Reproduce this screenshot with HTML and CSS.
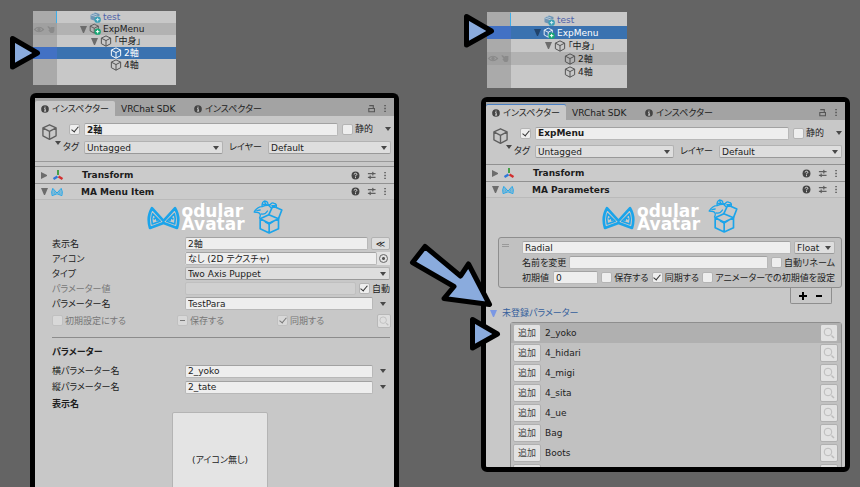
FILE: index.html
```html
<!DOCTYPE html>
<html lang="ja">
<head>
  <meta charset="UTF-8">
  <meta name="viewport" content="width=device-width, initial-scale=1.0">
  <title>MA Menu Item / MA Parameters</title>
  <link rel="stylesheet" href="styles.css">
</head>
<body>
  <svg class="symbols" aria-hidden="true">
    <symbol id="cube" viewBox="0 0 16 16">
      <path d="M8 1.2 14.2 4.2V11.6L8 14.9 1.8 11.6V4.2ZM1.8 4.2 8 7.4 14.2 4.2M8 7.4V14.9" fill="none" stroke="currentColor" stroke-width="1.3" stroke-linejoin="round"/>
    </symbol>
    <symbol id="prefab" viewBox="0 0 16 16">
      <use href="#cube" width="14" height="15"/>
      <circle cx="11.5" cy="11.5" r="4.3" fill="#17a673"/>
      <path d="M11.5 9.2v4.6M9.2 11.5h4.6" stroke="#fff" stroke-width="1.3"/>
    </symbol>
    <symbol id="model" viewBox="0 0 16 16">
      <path d="M2 5 8 2 14 4V7L8 6.5V13L2 11Z" fill="#6f95b4"/>
      <path d="M2 5 8 7M5 3.5 11 5.5" stroke="#c8d8e4" fill="none"/>
      <circle cx="11.5" cy="11.5" r="4.3" fill="#3b9fb5"/>
      <path d="M11.5 9.2v4.6M9.2 11.5h4.6" stroke="#d5eef2" stroke-width="1.3"/>
    </symbol>
    <symbol id="eye" viewBox="0 0 12 10">
      <path d="M1 5Q6 0 11 5Q6 10 1 5Z" fill="none" stroke="currentColor" stroke-width="1.2"/>
      <circle cx="6" cy="5" r="1.9" fill="currentColor"/>
    </symbol>
    <symbol id="hand" viewBox="0 0 12 12">
      <path d="M1 2 3 1.5 5.5 4V2.5H10.5V8L9 10.5H5.5L2.5 7 4 6Z" fill="currentColor"/>
    </symbol>
    <symbol id="info" viewBox="0 0 10 10">
      <circle cx="5" cy="5" r="4.8" fill="#444"/>
      <path d="M5 2v1.4M4 4.5H5.2V7.5M3.8 7.6h2.6" stroke="#ddd" stroke-width="1.2" fill="none"/>
    </symbol>
    <symbol id="help" viewBox="0 0 10 10">
      <circle cx="5" cy="5" r="4.4" fill="#444"/>
      <path d="M3.5 3.9Q3.6 2.5 5 2.5T6.5 3.8Q6.4 4.7 5 5.2V6M5 6.8V8" stroke="#ddd" stroke-width="1.1" fill="none"/>
    </symbol>
    <symbol id="preset" viewBox="0 0 10 10">
      <path d="M1 3H6M6.5 1V5M6.5 3H9.5M1 7H3.5M3.5 5V9M4 7H9.5" stroke="#444" stroke-width="1.1" fill="none"/>
    </symbol>
    <symbol id="dots" viewBox="0 0 4 10">
      <path d="M1.3 1h1.5v1.5H1.3ZM1.3 4.2h1.5v1.5H1.3ZM1.3 7.5h1.5V9H1.3Z" fill="#4a4a4a"/>
    </symbol>
    <symbol id="lock" viewBox="0 0 10 10">
      <path d="M2 5H8.3V8.7H2ZM2.5 1.8H7V5" fill="none" stroke="#555" stroke-width="1.2"/>
    </symbol>
    <symbol id="axes" viewBox="0 0 12 12">
      <path d="M6 1V6" stroke="#45a048" stroke-width="2"/>
      <path d="M5.5 7.5 1.5 10" stroke="#2f78d8" stroke-width="2.4"/>
      <path d="M6.5 7.5 10.5 10" stroke="#d22f2f" stroke-width="2.4"/>
    </symbol>
    <symbol id="ears" viewBox="0 0 100 70">
      <path d="M15 5Q-1 32 9 65L50 50 91 65Q101 32 85 5L50 44Z" fill="none" stroke="#1ba4ea" stroke-width="8" stroke-linejoin="round"/>
      <path d="M17 22Q12 38 16 53L40 45ZM83 22Q88 38 84 53L60 45ZM20 39 27 33 31 44M80 39 73 33 69 44" fill="none" stroke="#1ba4ea" stroke-width="5" stroke-linejoin="round"/>
    </symbol>
    <symbol id="catbox" viewBox="0 0 87 102">
      <g fill="none" stroke="#1ba4ea" stroke-width="5" stroke-linejoin="round" stroke-linecap="round">
        <path d="M20 56 47 70 75 56V86L47 99 20 86ZM20 56 46 44 75 56M47 70V98"/>
        <path d="M46 44 58 18 85 30 75 56M47 72 58 65M47 72 36 66"/>
        <path d="M2 36Q12 20 26 20 24 7 33 3 44 4 43 13L50 15Q54 6 62 10 71 12 68 22M2 36 15 38Q24 42 18 54M26 20Q36 15 45 16L54 25M33 4 37 14M24 42Q34 45 42 33" stroke-width="4"/>
        <path d="M28 13H40M55 17H66M10 32 20 30" stroke-width="4"/>
      </g>
    </symbol>
    <symbol id="search" viewBox="0 0 14 14">
      <circle cx="6" cy="6" r="3.8" fill="none" stroke="#bdbdbd" stroke-width="1"/>
      <path d="M9.5 9.5 12 12" stroke="#bdbdbd" stroke-width="1.5"/>
    </symbol>
    <symbol id="pointer" viewBox="0 0 32 36">
      <path d="M3.5 3.5V32L28.5 18Z" fill="#8aabdd" stroke="#000" stroke-width="5" stroke-linejoin="round"/>
    </symbol>
  </svg>

  <main class="board">
    <section class="column">
      <div class="hierarchy">
        <div class="node depth-1 model"><span class="gutter"></span><svg class="obj"><use href="#model"/></svg>test</div>
        <div class="node depth-1 hover"><span class="gutter"><svg><use href="#eye"/></svg><svg><use href="#hand"/></svg></span><i class="fold"></i><svg class="obj"><use href="#prefab"/></svg>ExpMenu</div>
        <div class="node depth-2"><span class="gutter"></span><i class="fold"></i><svg class="obj"><use href="#cube"/></svg>「中身」</div>
        <div class="node depth-3 selected"><span class="gutter"></span><svg class="obj"><use href="#cube"/></svg>2軸</div>
        <div class="node depth-3"><span class="gutter"></span><svg class="obj"><use href="#cube"/></svg>4軸</div>
      </div>
      <svg class="pointer pointer-item"><use href="#pointer"/></svg>

      <div class="inspector tall">
        <nav class="tabs">
          <button class="tab active"><svg><use href="#info"/></svg>インスペクター</button>
          <button class="tab">VRChat SDK</button>
          <button class="tab"><svg><use href="#info"/></svg>インスペクター</button>
          <span class="tab-tools"><svg><use href="#lock"/></svg><svg class="dots"><use href="#dots"/></svg></span>
        </nav>
        <header class="object">
          <span class="object-icon"><svg><use href="#cube"/></svg><i class="caret"></i></span>
          <div class="object-fields">
            <div class="line">
              <input type="checkbox" aria-label="アクティブ" checked>
              <input class="text name" type="text" aria-label="名前" value="2軸">
              <label class="check"><input type="checkbox">静的</label>
              <i class="caret"></i>
            </div>
            <div class="line">
              <label class="tag-label" for="tag1">タグ</label>
              <span class="select tag"><select id="tag1"><option>Untagged</option></select></span>
              <label class="layer-label" for="layer1">レイヤー</label>
              <span class="select layer"><select id="layer1"><option>Default</option></select></span>
            </div>
          </div>
        </header>
        <div class="divider"></div>
        <div class="component closed"><i class="fold"></i><svg><use href="#axes"/></svg><h2>Transform</h2><span class="tools"><svg><use href="#help"/></svg><svg><use href="#preset"/></svg><svg class="dots"><use href="#dots"/></svg></span></div>
        <div class="component"><i class="fold"></i><svg><use href="#ears"/></svg><h2>MA Menu Item</h2><span class="tools"><svg><use href="#help"/></svg><svg><use href="#preset"/></svg><svg class="dots"><use href="#dots"/></svg></span></div>

        <div class="logo"><svg class="logo-ears"><use href="#ears"/></svg><p>odular<br>Avatar</p><svg class="logo-box"><use href="#catbox"/></svg></div>

        <div class="form">
          <div class="field"><label for="label">表示名</label><input class="text" id="label" type="text" value="2軸"><button class="small-button">≪</button></div>
          <div class="field"><label for="icon">アイコン</label><span class="object-picker"><input class="text" id="icon" type="text" value="なし (2D テクスチャ)"><button aria-label="選択"></button></span></div>
          <div class="field"><label for="type">タイプ</label><span class="select"><select id="type"><option>Two Axis Puppet</option></select></span></div>
          <div class="field"><label class="dim" for="value">パラメーター値</label><input class="text off" id="value" type="text" disabled><label class="check"><input type="checkbox" checked>自動</label></div>
          <div class="field"><label for="param">パラメーター名</label><input class="text" id="param" type="text" value="TestPara"><i class="caret"></i></div>
          <div class="flags">
            <label class="check"><input type="checkbox" disabled>初期設定にする</label>
            <label class="check"><input class="mixed" type="checkbox" disabled>保存する</label>
            <label class="check"><input type="checkbox" checked disabled>同期する</label>
            <button class="search" aria-label="検索"><svg><use href="#search"/></svg></button>
          </div>
          <hr>
          <h3>パラメーター</h3>
          <div class="field axis"><label for="horizontal">横パラメーター名</label><input class="text" id="horizontal" type="text" value="2_yoko"><i class="caret"></i></div>
          <div class="field axis"><label for="vertical">縦パラメーター名</label><input class="text" id="vertical" type="text" value="2_tate"><i class="caret"></i></div>
          <h3>表示名</h3>
          <button class="icon-slot">(アイコン無し)</button>
        </div>
      </div>
    </section>

    <section class="column second">
      <div class="hierarchy">
        <div class="node depth-1 model"><span class="gutter"></span><svg class="obj"><use href="#model"/></svg>test</div>
        <div class="node depth-1 selected"><span class="gutter"></span><i class="fold"></i><svg class="obj"><use href="#prefab"/></svg>ExpMenu</div>
        <div class="node depth-2"><span class="gutter"></span><i class="fold"></i><svg class="obj"><use href="#cube"/></svg>「中身」</div>
        <div class="node depth-3 hover"><span class="gutter"><svg><use href="#eye"/></svg><svg><use href="#hand"/></svg></span><svg class="obj"><use href="#cube"/></svg>2軸</div>
        <div class="node depth-3"><span class="gutter"></span><svg class="obj"><use href="#cube"/></svg>4軸</div>
      </div>
      <svg class="pointer pointer-root"><use href="#pointer"/></svg>

      <div class="inspector focused">
        <nav class="tabs">
          <button class="tab active"><svg><use href="#info"/></svg>インスペクター</button>
          <button class="tab">VRChat SDK</button>
          <button class="tab"><svg><use href="#info"/></svg>インスペクター</button>
          <span class="tab-tools"><svg><use href="#lock"/></svg><svg class="dots"><use href="#dots"/></svg></span>
        </nav>
        <header class="object">
          <span class="object-icon"><svg><use href="#cube"/></svg><i class="caret"></i></span>
          <div class="object-fields">
            <div class="line">
              <input type="checkbox" aria-label="アクティブ" checked>
              <input class="text name" type="text" aria-label="名前" value="ExpMenu">
              <label class="check"><input type="checkbox">静的</label>
              <i class="caret"></i>
            </div>
            <div class="line">
              <label class="tag-label" for="tag2">タグ</label>
              <span class="select tag"><select id="tag2"><option>Untagged</option></select></span>
              <label class="layer-label" for="layer2">レイヤー</label>
              <span class="select layer"><select id="layer2"><option>Default</option></select></span>
            </div>
          </div>
        </header>
        <div class="component closed"><i class="fold"></i><svg><use href="#axes"/></svg><h2>Transform</h2><span class="tools"><svg><use href="#help"/></svg><svg><use href="#preset"/></svg><svg class="dots"><use href="#dots"/></svg></span></div>
        <div class="component"><i class="fold"></i><svg><use href="#ears"/></svg><h2>MA Parameters</h2><span class="tools"><svg><use href="#help"/></svg><svg><use href="#preset"/></svg><svg class="dots"><use href="#dots"/></svg></span></div>

        <div class="logo"><svg class="logo-ears"><use href="#ears"/></svg><p>odular<br>Avatar</p><svg class="logo-box"><use href="#catbox"/></svg></div>

        <div class="parameter">
          <span class="grip"></span>
          <div class="parameter-fields">
            <div class="line">
              <input class="text" type="text" aria-label="パラメーター名" value="Radial">
              <span class="select value-type"><select aria-label="型"><option>Float</option></select></span>
            </div>
            <div class="line">
              <label for="rename">名前を変更</label>
              <input class="text" id="rename" type="text">
              <label class="check"><input type="checkbox">自動リネーム</label>
            </div>
            <div class="line spread">
              <label class="initial">初期値<input class="text" type="text" value="0"></label>
              <label class="check"><input type="checkbox">保存する</label>
              <label class="check"><input type="checkbox" checked>同期する</label>
              <label class="check"><input type="checkbox">アニメーターでの初期値を設定</label>
            </div>
          </div>
        </div>
        <div class="list-buttons"><button aria-label="追加"><svg viewBox="0 0 10 10"><path d="M5 1V9M1 5H9" stroke="#000" stroke-width="2"/></svg></button><button aria-label="削除"><svg viewBox="0 0 10 10"><path d="M2 5H8" stroke="#000" stroke-width="2"/></svg></button></div>

        <h3 class="foldout"><i class="fold"></i>未登録パラメーター</h3>
        <ul class="unregistered">
          <li class="current"><button>追加</button><span>2_yoko</span><button class="search" aria-label="検索"><svg><use href="#search"/></svg></button></li>
          <li><button>追加</button><span>4_hidari</span><button class="search" aria-label="検索"><svg><use href="#search"/></svg></button></li>
          <li><button>追加</button><span>4_migi</span><button class="search" aria-label="検索"><svg><use href="#search"/></svg></button></li>
          <li><button>追加</button><span>4_sita</span><button class="search" aria-label="検索"><svg><use href="#search"/></svg></button></li>
          <li><button>追加</button><span>4_ue</span><button class="search" aria-label="検索"><svg><use href="#search"/></svg></button></li>
          <li><button>追加</button><span>Bag</span><button class="search" aria-label="検索"><svg><use href="#search"/></svg></button></li>
          <li><button>追加</button><span>Boots</span><button class="search" aria-label="検索"><svg><use href="#search"/></svg></button></li>
          <li><button></button><span></span><button class="search" aria-label="検索"><svg><use href="#search"/></svg></button></li>
        </ul>
      </div>
      <svg class="big-arrow" viewBox="0 0 84 68"><path d="M16 5.5 51.5 35 59.5 23 80.5 63.5 35 57.5 45 45.5 3.5 21.5Z" fill="#8aabdd" stroke="#000" stroke-width="5" stroke-linejoin="round"/></svg>
      <svg class="pointer pointer-list"><use href="#pointer"/></svg>
    </section>
  </main>
</body>
</html>
```
FILE: styles.css
```css
* {
  margin: 0;
  padding: 0;
  box-sizing: border-box;
}

html,
body {
  height: 100%;
}

body {
  background: #646464;
  color: #1c1c1c;
  font-family: 'DejaVu Sans', 'Noto Sans CJK JP', sans-serif;
  font-size: 9px;
  line-height: 12px;
  font-feature-settings: 'palt';
  overflow: hidden;
}

button,
input,
select {
  font: inherit;
  font-feature-settings: inherit;
  color: inherit;
  border: none;
  background: none;
  border-radius: 2px;
}

svg {
  flex: none;
}

.symbols {
  position: absolute;
  width: 0;
  height: 0;
}

.board {
  display: grid;
  grid-template-columns: minmax(0, 1fr) minmax(0, 1fr);
  gap: 82px;
  height: 100%;
  padding: 0 10px 0 30px;
}

.column {
  position: relative;
  display: flex;
  flex-direction: column;
  gap: 8px;
  min-height: 0;
  padding-top: 11px;
}

.second {
  gap: 9px;
  padding: 12px 0 15px;
}

/* hierarchy */
.hierarchy {
  flex: none;
  width: 143px;
  height: 74px;
  margin-left: 3px;
  background: linear-gradient(90deg, #aaa 24px, #c8c8c8 24px);
}

.second .hierarchy {
  width: 140px;
  height: 76px;
  margin-left: 6px;
  padding-top: 1px;
}

.node {
  display: flex;
  align-items: center;
  gap: 2px;
  height: 12px;
  white-space: nowrap;
}

.second .node {
  height: 13px;
}

.gutter {
  display: flex;
  align-items: center;
  width: 24px;
  height: 100%;
  color: #8a8a8a;
}

.gutter svg {
  width: 12px;
  height: 9px;
}

.obj {
  width: 12px;
  height: 12px;
  color: #505050;
}

.depth-1 .obj { margin-left: 30px; }
.depth-2 .obj { margin-left: 40px; }
.depth-3 .obj { margin-left: 51px; }
.depth-1 .fold { margin-left: 21px; }
.depth-2 .fold { margin-left: 32px; }
.node .fold + .obj { margin-left: 0; }

.model { color: #5062a8; }
.model .gutter { border-right: 1px solid #3eaeea; }
.hover { background: #b2b2b2; }
.hover .gutter { background: #a0a0a0; }

.selected {
  background: #3a72b0;
  color: #fff;
}

.selected .obj { color: #fff; }
.selected .gutter { background: #4271c4; }
.selected .fold { border-top-color: #20436c; }

.fold {
  flex: none;
  width: 7px;
  height: 7px;
  border: 3px solid transparent;
  border-top: 7px solid #6c6c6c;
  border-bottom: 0;
}

.closed .fold {
  border: 3px solid transparent;
  border-left: 6px solid #6c6c6c;
  border-right: 0;
}

.caret {
  flex: none;
  width: 6px;
  height: 4px;
  border: 3px solid transparent;
  border-top: 4px solid #484848;
  border-bottom: 0;
}

/* inspector */
.inspector {
  flex: 1;
  min-height: 0;
  overflow: hidden;
  background: #c8c8c8;
  border: 5px solid #000;
  border-radius: 6px;
}

.tall {
  border-bottom: 0;
  border-radius: 6px 6px 0 0;
}

.tabs {
  display: flex;
  height: 18px;
  padding-top: 3px;
  background: #a3a3a3;
}

.tab {
  display: flex;
  align-items: center;
  gap: 3px;
  padding: 0 6px;
  white-space: nowrap;
}

.tab svg {
  width: 8px;
  height: 8px;
}

.tab:nth-child(2) {
  width: 73px;
}

.active {
  width: 80px;
  background: #c8c8c8;
  border-radius: 2px 2px 0 0;
}

.focused .active {
  box-shadow: 0 -1px #4a80c4;
}

.tab-tools,
.tools {
  display: flex;
  align-items: center;
  gap: 7px;
  margin-left: auto;
  padding-right: 7px;
}

.tab-tools svg,
.tools svg {
  width: 9px;
  height: 9px;
}

.tab-tools .dots,
.tools .dots {
  width: 4px;
}

.object {
  display: flex;
  gap: 8px;
  height: 45px;
  padding: 4px 3px 0 6px;
}

.focused .object {
  height: 44px;
}

.object-icon {
  width: 20px;
  height: 22px;
  margin-top: 3px;
}

.object-icon svg {
  display: block;
  width: 17px;
  height: 18px;
  color: #606060;
}

.object-icon .caret {
  display: block;
  margin-left: auto;
}

.object-fields {
  flex: 1;
  min-width: 0;
}

.line {
  display: flex;
  align-items: center;
  gap: 3px;
}

.object-fields .line {
  gap: 4px;
  height: 18px;
}

.object-fields .line > .caret {
  margin-left: 8px;
}

.text {
  flex: 1;
  min-width: 0;
  height: 13px;
  padding: 0 2px;
  background: #eee;
  border: 1px solid #b8b8b8;
  border-top-color: #a2a2a2;
}

.name {
  font-weight: bold;
}

.off {
  background: #d0d0d0;
  border-color: #c0c0c0;
}

.select {
  position: relative;
  display: flex;
  flex: 1;
  min-width: 0;
}

.select select {
  width: 100%;
  height: 13px;
  padding: 0 2px;
  appearance: none;
  background: #dedede;
  border: 1px solid #b2b2b2;
  border-bottom-color: #999;
}

.select::after {
  content: '';
  position: absolute;
  top: 5px;
  right: 4px;
  border: 3px solid transparent;
  border-top: 4px solid #484848;
  border-bottom: 0;
}

.tag-label,
.layer-label {
  flex: none;
  white-space: nowrap;
}

.tag-label {
  width: 17px;
  margin-left: -6px;
}

.tag { flex: 139; }
.layer-label { width: 37px; text-align: center; }
.layer { flex: 123; }

input[type="checkbox"] {
  flex: none;
  display: flex;
  justify-content: center;
  width: 11px;
  height: 11px;
  appearance: none;
  background: #eee;
  border: 1px solid #b4b4b4;
}

input[type="checkbox"]:checked::after {
  content: '';
  width: 3px;
  height: 6px;
  border: solid #333;
  border-width: 0 1px 1px 0;
  transform: rotate(40deg);
}

input[type="checkbox"]:disabled {
  background: #d8d8d8;
  border-color: #c0c0c0;
}

input[type="checkbox"]:disabled::after {
  border-color: #777;
}

.mixed::after {
  content: '';
  width: 5px;
  margin-top: 4px;
  border-top: 1px solid #777;
}

.check {
  display: flex;
  align-items: center;
  gap: 2px;
  white-space: nowrap;
}

.divider {
  height: 5px;
  border-top: 1px solid #999;
}

.component {
  display: flex;
  align-items: center;
  height: 17px;
  padding-left: 6px;
  background: #cbcbcb;
  border-top: 1px solid #919191;
}

.component + .component {
  border-bottom: 1px solid #bababa;
}

.component > svg {
  width: 12px;
  height: 12px;
  margin-left: 3px;
}

.component h2 {
  margin-left: 18px;
  font-size: 9px;
}

.closed .fold { margin-right: 1px; }

.logo {
  display: flex;
  align-items: center;
  justify-content: center;
  height: 36px;
  color: #fff;
}

.focused .logo {
  height: 39px;
  padding-left: 9px;
}

.logo p {
  width: 73px;
  padding-left: 2px;
  font-size: 17px;
  font-weight: bold;
  line-height: 13px;
}

.logo-ears {
  width: 33px;
  height: 24px;
}

.logo-box {
  width: 30px;
  height: 34px;
  margin-bottom: 3px;
}

.form {
  padding: 0 4px 0 17px;
}

.field {
  display: flex;
  align-items: center;
  gap: 3px;
  height: 15px;
}

.field > label:first-child {
  width: 130px;
  white-space: nowrap;
}

.dim {
  color: #777;
}

.field > .caret {
  margin: 0 4px;
}

.small-button {
  width: 19px;
  height: 13px;
  background: #dedede;
  border: 1px solid #b2b2b2;
  line-height: 10px;
}

.object-picker {
  display: flex;
  flex: 1;
  align-items: center;
  min-width: 0;
  background: #e2e2e2;
}

.object-picker button {
  width: 9px;
  height: 9px;
  margin: 0 2px;
  border: 1px solid #666;
  border-radius: 50%;
  background: radial-gradient(#555 1px, transparent 2px);
}

.flags {
  display: grid;
  grid-template-columns: 125px 100px 1fr 13px;
  align-items: center;
  height: 19px;
  color: #777;
}

.search {
  display: flex;
  align-items: center;
  justify-content: center;
  width: 14px;
  height: 14px;
  background: #dedede;
  border: 1px solid #b8b8b8;
}

.search svg {
  width: 12px;
  height: 12px;
}

.form hr {
  margin: 7px 0 8px;
  border: none;
  border-top: 1px solid #8c8c8c;
}

.form h3 {
  font-size: 9px;
  height: 17px;
}

.axis {
  height: 16px;
}

.axis + h3 {
  padding-top: 3px;
}

.icon-slot {
  display: block;
  width: 96px;
  height: 96px;
  margin: 0 0 0 120px;
  background: #e4e4e4;
  border: 1px solid #b4b4b4;
}

/* registered parameter */
.parameter {
  display: flex;
  gap: 13px;
  margin: 0 3px 0 12px;
  padding: 2px 6px 2px 3px;
  background: #c1c1c1;
  border: 1px solid #8e8e8e;
  border-radius: 3px;
}

.grip {
  flex: none;
  width: 7px;
  height: 3px;
  margin-top: 4px;
  border: solid #999;
  border-width: 1px 0;
}

.parameter-fields {
  flex: 1;
  min-width: 0;
}

.parameter .line {
  height: 15px;
}

.value-type {
  flex: 0 0 41px;
}

.parameter .spread {
  justify-content: space-between;
}

.initial {
  display: flex;
  align-items: center;
  gap: 4px;
}

.initial .text {
  flex: none;
  width: 45px;
}

.list-buttons {
  display: flex;
  justify-content: space-evenly;
  width: 42px;
  height: 16px;
  margin: 0 13px 0 auto;
  border: 1px solid #8e8e8e;
  border-top: 0;
  border-radius: 0 0 2px 2px;
}

.list-buttons svg {
  display: block;
  width: 10px;
  height: 10px;
}

.foldout {
  display: flex;
  align-items: center;
  gap: 5px;
  height: 18px;
  padding-left: 4px;
  color: #355f9c;
  font-size: 9px;
  font-weight: normal;
}

.foldout .fold {
  border-top-color: #7b98e4;
}

.unregistered {
  margin: 0 3px 0 24px;
  list-style: none;
  background: #c1c1c1;
  border: 1px solid #8e8e8e;
  border-radius: 3px 3px 0 0;
}

.unregistered li {
  display: flex;
  align-items: center;
  gap: 4px;
  height: 20px;
  padding: 0 3px 0 2px;
}

.unregistered .current {
  background: #b0b0b0;
}

.unregistered button {
  width: 28px;
  height: 18px;
  background: #e2e2e2;
  border: 1px solid #b0b0b0;
  color: #444;
}

.unregistered .search {
  width: 18px;
  margin-left: auto;
}

.unregistered .search svg {
  width: 14px;
  height: 14px;
}

/* pointers drawn over the panels */
.pointer {
  position: absolute;
  width: 32px;
  height: 36px;
}

.pointer-item { left: -21px; top: 35px; }
.pointer-root { left: -18px; top: 13px; }
.pointer-list { left: -12px; top: 316px; }

.big-arrow {
  position: absolute;
  left: -72px;
  top: 241px;
  width: 84px;
  height: 68px;
}
```
